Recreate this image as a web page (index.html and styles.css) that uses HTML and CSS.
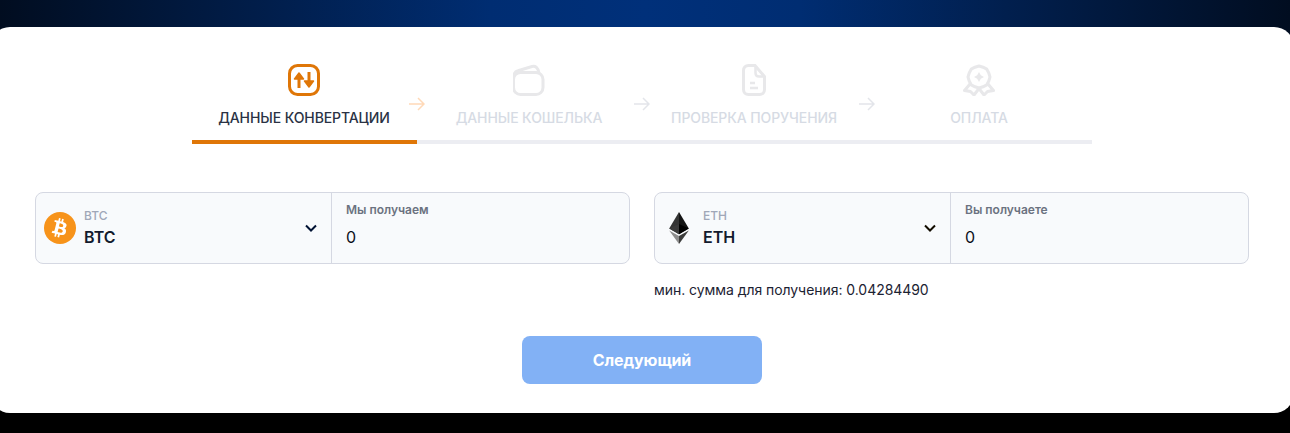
FILE: index.html
```html
<!DOCTYPE html>
<html lang="ru">
<head>
    <meta charset="UTF-8">
    <meta name="viewport" content="width=device-width, initial-scale=1.0">
    <title>Обмен</title>
    <link rel="stylesheet" href="styles.css">
</head>
<body>
    <main class="card">
        <div class="steps">
            <div class="step active">
                <svg class="step-icon" viewBox="0 0 32 32" fill="none" stroke="currentColor" stroke-width="3">
                    <rect x="1.500" y="1.500" width="29" height="29" rx="8"/>
                    <path d="M11 24V12M21 8v12"/>
                    <path d="M6.500 15 11 9l4.500 6ZM16.500 17 21 23l4.500-6Z" fill="currentColor" stroke-width="1.500" stroke-linejoin="round"/>
                </svg>
                <span class="step-name">ДАННЫЕ КОНВЕРТАЦИИ</span>
                <svg class="step-arrow" viewBox="0 0 16 14" fill="none" stroke="currentColor" stroke-width="1.5"><path d="M0 7h15M9 1l6 6-6 6"/></svg>
            </div>
            <div class="step">
                <svg class="step-icon" viewBox="0 0 32 32" fill="none" stroke="currentColor" stroke-width="3">
                    <rect x="0.500" y="8.500" width="29.500" height="22" rx="7"/>
                    <path d="M0.500 14c0-4 1.500-6.500 4.500-7.300L19 2.500c3.500-.8 6 1 7 6.500"/>
                </svg>
                <span class="step-name">ДАННЫЕ КОШЕЛЬКА</span>
                <svg class="step-arrow" viewBox="0 0 16 14" fill="none" stroke="currentColor" stroke-width="1.5"><path d="M0 7h15M9 1l6 6-6 6"/></svg>
            </div>
            <div class="step">
                <svg class="step-icon" viewBox="0 0 32 32" fill="none" stroke="currentColor" stroke-width="3">
                    <path d="M17 1.500h-6.500c-3 0-5 2-5 5v19c0 3 2 5 5 5h11c3 0 5-2 5-5V12.500L17 1.500Z"/>
                    <path d="M17.500 3v6c0 2 1.200 3.500 3.500 3.500h4M12 19h5M12 24h8" stroke-width="2.500"/>
                </svg>
                <span class="step-name">ПРОВЕРКА ПОРУЧЕНИЯ</span>
                <svg class="step-arrow" viewBox="0 0 16 14" fill="none" stroke="currentColor" stroke-width="1.5"><path d="M0 7h15M9 1l6 6-6 6"/></svg>
            </div>
            <div class="step">
                <svg class="step-icon" viewBox="0 0 32 32" fill="none" stroke="currentColor" stroke-width="3" stroke-linejoin="round">
                    <path d="M16 2l4 1.200 3.800 2 2 3.800L27 13l-1.200 4-2 3.800-3.800 2L16 24l-4-1.200-3.800-2-2-3.800L5 13l1.200-4 2-3.800 3.800-2Z"/>
                    <path d="M7 20l-5.500 6.500 6 1L11 31l5-6.500 5 6.500 3.500-3.500 6-1L25 20"/>
                    <path d="M16 8l1.800 3.200L21 13l-3.200 1.800L16 18l-1.800-3.200L11 13l3.200-1.800Z" fill="currentColor" stroke="none"/>
                </svg>
                <span class="step-name">ОПЛАТА</span>
            </div>
        </div>

        <div class="exchange">
            <div class="side">
                <div class="field">
                    <div class="coin">
                        <svg class="coin-icon" viewBox="0 0 32 32">
                            <circle cx="16" cy="16" r="16" fill="#f7931a"/>
                            <path fill="#fff" d="M22.600 14c.3-2.100-1.300-3.200-3.500-4l.7-2.800-1.700-.4-.7 2.700-1.400-.3.700-2.800-1.700-.4-.7 2.800-1.100-.3-2.400-.6-.4 1.800s1.300.3 1.200.3c.7.2.8.6.8 1l-.8 3.200-1.100 4.400c-.1.200-.3.500-.8.400l-1.200-.3-.9 2 2.200.6 1.200.3-.7 2.800 1.700.4.7-2.800 1.400.4-.7 2.700 1.700.4.7-2.800c2.900.6 5.100.3 6-2.300.7-2.100 0-3.300-1.500-4.100 1.100-.3 1.900-1 2.100-2.500Zm-3.900 5.400c-.5 2.100-4 1-5.100.7l.9-3.700c1.100.3 4.800.8 4.200 3Zm.5-5.500c-.5 1.900-3.400.9-4.300.7l.8-3.300c1 .2 4 .7 3.500 2.600Z"/>
                        </svg>
                        <div class="coin-text">
                            <span class="coin-small">BTC</span>
                            <span class="coin-name">BTC</span>
                        </div>
                        <svg class="chevron" viewBox="0 0 12 8" fill="none" stroke="#001233" stroke-width="2"><path d="M1 1.500l5 5 5-5"/></svg>
                    </div>
                    <div class="amount">
                        <span class="amount-label">Мы получаем</span>
                        <span class="amount-value">0</span>
                    </div>
                </div>
            </div>
            <div class="side">
                <div class="field">
                    <div class="coin">
                        <svg class="coin-icon" viewBox="0 0 32 32">
                            <path fill="#343434" d="M16 0 6.200 16.500 16 22.300Z"/>
                            <path fill="#141414" d="M16 0v22.300l9.800-5.800Z"/>
                            <path fill="#8c8c8c" d="M6.200 18.400 16 32v-7.900Z"/>
                            <path fill="#3c3c3b" d="M25.800 18.400 16 32v-7.900Z"/>
                            <path fill="#3a3a3a" d="M6.200 16.500 16 12v10.300Z"/>
                            <path fill="#000" d="M25.800 16.500 16 12v10.300Z"/>
                        </svg>
                        <div class="coin-text">
                            <span class="coin-small">ETH</span>
                            <span class="coin-name">ETH</span>
                        </div>
                        <svg class="chevron" viewBox="0 0 12 8" fill="none" stroke="#120c00" stroke-width="2"><path d="M1 1.500l5 5 5-5"/></svg>
                    </div>
                    <div class="amount">
                        <span class="amount-label">Вы получаете</span>
                        <span class="amount-value">0</span>
                    </div>
                </div>
                <p class="min-sum">мин. сумма для получения: 0.04284490</p>
            </div>
        </div>

        <div class="actions">
            <button class="next">Следующий</button>
        </div>
    </main>
</body>
</html>
```

FILE: styles.css
```css
html, body {
    height: 100%;
}
body {
    margin: 0;
    overflow: hidden;
    padding-top: 27px;
    box-sizing: border-box;
    font-family: Inter, "Liberation Sans", sans-serif;
    background: linear-gradient(to right, #010d20, #011f4e 22%, #002d72 38%, #00307a 50%, #002d72 62%, #011f4e 78%, #010d20) top / 100% 200px no-repeat, #000;
}
.card {
    box-sizing: border-box;
    width: 1304px;
    height: 386px;
    margin-left: -10px;
    padding: 37px 45px 0;
    background: #fff;
    border-radius: 20px;
}
.steps {
    display: flex;
    width: 900px;
    margin: 0 auto;
}
.step {
    position: relative;
    flex: 1;
    height: 76px;
    display: flex;
    flex-direction: column;
    align-items: center;
    border-bottom: 4px solid #ecedf2;
    color: #e8e8ea;
}
.step.active {
    border-bottom-color: #df7607;
    color: #df7607;
}
.step-icon {
    width: 32px;
    height: 32px;
    margin-right: 1px;
}
.step-name {
    margin-top: 13px;
    margin-right: 1px;
    font-size: 14px;
    line-height: 18px;
    font-weight: 500;
    letter-spacing: -0.1px;
    white-space: nowrap;
    color: #d6dbe4;
}
.step.active .step-name {
    color: #2a3244;
}
.step-arrow {
    position: absolute;
    top: 33px;
    right: -8px;
    width: 16px;
    height: 14px;
    color: #e3e5ea;
}
.step.active .step-arrow {
    color: #ffd9b8;
}
.exchange {
    display: flex;
    gap: 24px;
    margin-top: 48px;
}
.side {
    flex: 1;
}
.field {
    display: flex;
    height: 72px;
    box-sizing: border-box;
    background: #f8fafc;
    border: 1px solid #d5d8e2;
    border-radius: 8px;
}
.coin {
    width: 296px;
    flex: none;
    box-sizing: border-box;
    display: flex;
    align-items: center;
    gap: 8px;
    padding: 0 14px 0 8px;
    border-right: 1px solid #d5d8e2;
}
.coin-icon {
    width: 32px;
    height: 32px;
    flex: none;
}
.coin-text {
    flex: 1;
    display: flex;
    flex-direction: column;
    gap: 3px;
}
.coin-small {
    font-size: 12px;
    line-height: 14px;
    font-weight: 500;
    color: #a0a7b8;
}
.coin-name {
    font-size: 16px;
    line-height: 22px;
    font-weight: 600;
    color: #131b2e;
}
.chevron {
    width: 12px;
    height: 8px;
    margin-top: -1px;
}
.amount {
    flex: 1;
    display: flex;
    flex-direction: column;
    padding: 10px 14px 0;
}
.amount-label {
    font-size: 12px;
    line-height: 14px;
    font-weight: 600;
    color: #6b7280;
}
.amount-value {
    margin-top: 9px;
    font-size: 16px;
    line-height: 22px;
    color: #0b0f1a;
}
.min-sum {
    margin: 17px 0 0;
    font-size: 14px;
    line-height: 18px;
    letter-spacing: -0.05px;
    color: #1b2232;
}
.actions {
    display: flex;
    justify-content: center;
    margin-top: 37px;
}
.next {
    width: 240px;
    height: 48px;
    border: none;
    border-radius: 8px;
    background: #82b1f5;
    color: #fff;
    font-family: inherit;
    font-size: 16px;
    font-weight: 700;
    letter-spacing: -0.1px;
    cursor: pointer;
}
```
